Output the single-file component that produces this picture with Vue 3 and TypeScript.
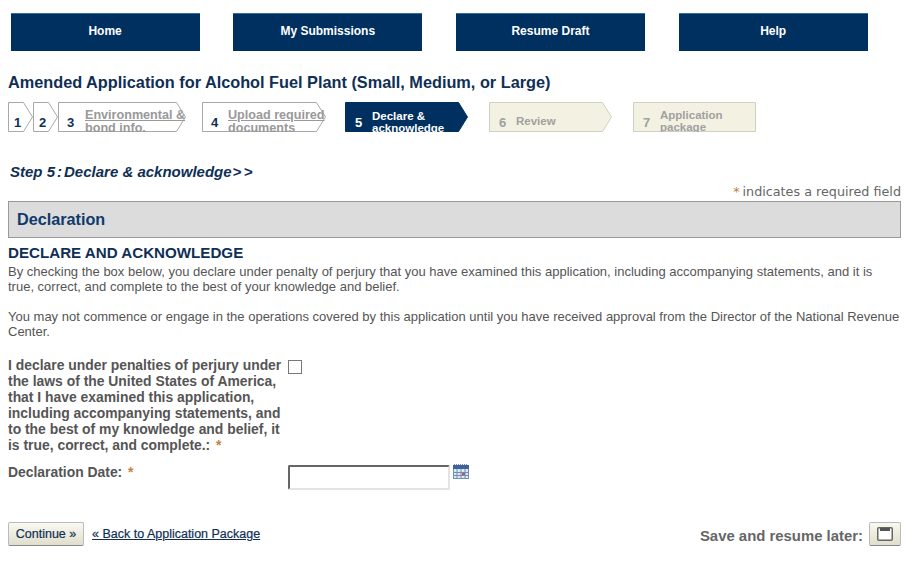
<script setup lang="ts">
interface Step {
  n: number
  lines: string[]
  width: number
  gap: number
  state: 'done' | 'current' | 'todo' | 'last'
}
const nav = ['Home', 'My Submissions', 'Resume Draft', 'Help']
const steps: Step[] = [
  { n: 1, lines: [], width: 25, gap: 0, state: 'done' },
  { n: 2, lines: [], width: 25, gap: 0, state: 'done' },
  { n: 3, lines: ['Environmental &', 'bond info.'], width: 128, gap: 0, state: 'done' },
  { n: 4, lines: ['Upload required', 'documents'], width: 124, gap: 16, state: 'done' },
  { n: 5, lines: ['Declare &', 'acknowledge'], width: 123, gap: 19, state: 'current' },
  { n: 6, lines: ['Review'], width: 123, gap: 21, state: 'todo' },
  { n: 7, lines: ['Application', 'package'], width: 123, gap: 21, state: 'last' },
]
const shape = (s: Step): string => {
  const w = s.width - 0.5
  if (s.state === 'last') return `0.5,0.5 ${w},0.5 ${w},29.5 0.5,29.5`
  const t = w - 9
  return `0.5,0.5 ${t},0.5 ${w},15 ${t},29.5 0.5,29.5`
}
</script>

<template>
  <div class="page">
    <nav class="nav">
      <a v-for="item in nav" :key="item" class="nav-item">{{ item }}</a>
    </nav>

    <h1 class="title">Amended Application for Alcohol Fuel Plant (Small, Medium, or Large)</h1>

    <ol class="steps">
      <li
        v-for="s in steps"
        :key="s.n"
        class="step"
        :class="s.state"
        :style="{ width: s.width + 'px', marginLeft: s.gap + 'px' }"
      >
        <svg class="step-bg" :width="s.width" height="30">
          <polygon :points="shape(s)" />
        </svg>
        <span class="num">{{ s.n }}</span>
        <span v-if="s.lines.length" class="label">
          <span v-for="l in s.lines" :key="l" class="line">{{ l }}</span>
        </span>
      </li>
    </ol>

    <h2 class="step-title">Step 5<span class="colon">:</span>Declare &amp; acknowledge<span class="arrows">&gt;&gt;</span></h2>

    <p class="req"><span class="star">*</span>indicates a required field</p>

    <div class="section">Declaration</div>

    <h3 class="heading">DECLARE AND ACKNOWLEDGE</h3>
    <p class="para first">By checking the box below, you declare under penalty of perjury that you have examined this application, including accompanying statements, and it is true, correct, and complete to the best of your knowledge and belief.</p>
    <p class="para second">You may not commence or engage in the operations covered by this application until you have received approval from the Director of the National Revenue Center.</p>

    <div class="form">
      <label class="lbl">I declare under penalties of perjury under the laws of the United States of America, that I have examined this application, including accompanying statements, and to the best of my knowledge and belief, it is true, correct, and complete.: <span class="star">*</span></label>
      <div class="box-cell"><span class="check"></span></div>
      <label class="lbl date-lbl">Declaration Date: <span class="star">*</span></label>
      <div class="date-cell">
        <span class="date-input"></span>
        <svg class="cal" width="16" height="15" viewBox="0 0 16 15">
          <rect x="0" y="1" width="16" height="14" fill="#dfe6f2" />
          <rect x="0" y="1" width="16" height="4" fill="#3f62a0" />
          <path d="M1 0.5h14" stroke="#8a8a8a" stroke-dasharray="1 1" fill="none" />
          <path d="M0.5 5v10M4 5v10M8 5v10M12 5v10M15.5 5v10M0 8.5h16M0 11.5h16M0 14.5h16" stroke="#6f8fb8" fill="none" />
          <rect x="9" y="9" width="3" height="2" fill="#d05050" />
        </svg>
      </div>
    </div>

    <div class="footer">
      <div class="left">
        <button class="btn" type="button">Continue »</button>
        <a class="back">« Back to Application Package</a>
      </div>
      <div class="right">
        <span class="save">Save and resume later:</span>
        <button class="btn icon" type="button" aria-label="Save">
          <svg width="16" height="14" viewBox="0 0 16 14">
            <rect x="0.75" y="0.75" width="14.5" height="12.5" rx="1" fill="#fff" stroke="#666" stroke-width="1.5" />
            <rect x="3" y="1" width="10" height="3" fill="#555" />
          </svg>
        </button>
      </div>
    </div>
  </div>
</template>

<style>
html, body { margin: 0; background: #fff; }
</style>

<style scoped>
.page {
  width: 893px;
  height: 574px;
  padding: 13px 14px 0 8px;
  font-family: "Liberation Sans", Arial, sans-serif;
  color: #555;
  overflow: hidden;
}
.nav { display: flex; gap: 33.7px; margin-left: 2.6px; }
.nav-item {
  width: 189px;
  height: 38px;
  box-sizing: border-box;
  padding-bottom: 3px;
  border-top: 1px solid #2f6f9f;
  background: #003060;
  color: #fff;
  font-weight: 700;
  font-size: 12px;
  display: flex;
  align-items: center;
  justify-content: center;
}
.title {
  margin: 21px 0 0;
  font-size: 16.3px;
  line-height: 20px;
  font-weight: 700;
  color: #0f2f55;
}
.steps { list-style: none; display: flex; margin: 10px 0 0; padding: 0; height: 30px; }
.step {
  position: relative;
  height: 30px;
  box-sizing: border-box;
  display: flex;
  align-items: flex-start;
  overflow: hidden;
  font-weight: 700;
  font-size: 12.6px;
  color: #999;
}
.step-bg { position: absolute; left: 0; top: 0; }
.step-bg polygon { fill: #fff; stroke: #a8a8a8; stroke-width: 1; }
.num { position: relative; flex: none; width: 27px; padding: 13px 0 0 10px; box-sizing: border-box; line-height: 16px; font-size: 13px; color: #0f2f55; }
.done:nth-child(-n+2) .num { padding-left: 6px; width: 25px; }
.done:nth-child(3) .num { padding-left: 9px; }
.done:nth-child(4) .num { padding-left: 9px; width: 26px; }
.label { position: relative; display: flex; flex-direction: column; }
.line { line-height: 12px; white-space: nowrap; text-decoration: underline; }
.done .label { padding-top: 7px; }
.done .line { line-height: 12.5px; }
.current .step-bg polygon { fill: #003060; stroke: #003060; }
.current { color: #fff; font-size: 11.5px; }
.current .num { color: #fff; }
.current .label { padding-top: 8px; }
.current .line, .todo .line, .last .line { text-decoration: none; }
.todo .step-bg polygon, .last .step-bg polygon { fill: #f3f2e2; stroke: #cfcfc2; }
.todo, .last { color: #a0a0a0; font-size: 11.5px; }
.todo .num, .last .num { color: #a0a0a0; }
.todo .label { padding-top: 13px; }
.last .label { padding-top: 7px; }

.step-title {
  margin: 31px 0 0 2px;
  font-size: 15px;
  line-height: 18px;
  font-style: italic;
  font-weight: 700;
  color: #0f2f55;
}
.colon { margin: 0 2px; }
.arrows { letter-spacing: 2.5px; margin-left: 1px; }
.req {
  margin: 3px 0 0;
  text-align: right;
  font-family: "DejaVu Sans", Verdana, sans-serif;
  font-size: 12.75px;
  line-height: 15px;
  color: #666;
}
.star { color: #bd8347; }
.req .star { margin-right: 3px; }
.lbl .star { margin-left: 2px; }
.section {
  margin-top: 2px;
  height: 37px;
  box-sizing: border-box;
  border: 1px solid #999;
  background: #dcdcdc;
  color: #0f3a6b;
  font-size: 16.2px;
  font-weight: 700;
  line-height: 35px;
  padding-left: 8px;
}
.heading {
  margin: 7px 0 0;
  font-size: 15.15px;
  line-height: 16px;
  font-weight: 700;
  color: #0f2f55;
}
.para { margin: 0; font-size: 13px; line-height: 15px; color: #555; }
.first { margin-top: 3px; }
.second { margin-top: 15px; }
.form {
  display: grid;
  grid-template-columns: 280px 1fr;
  margin-top: 18px;
}
.lbl { font-size: 13.9px; font-weight: 700; line-height: 16px; color: #555; width: 276px; }
.check {
  display: block;
  width: 12px;
  height: 12px;
  border: 1px solid #777;
  background: #fff;
}
.box-cell { padding-top: 3px; }
.date-lbl { margin-top: 11px; }
.date-cell { display: flex; align-items: flex-start; margin-top: 12px; }
.date-input {
  width: 162px;
  height: 25px;
  box-sizing: border-box;
  border-style: solid;
  border-width: 2px 2px 2px 2px;
  border-color: #666 #e4e4e4 #e4e4e4 #666;
  border-radius: 2px;
  background: #fff;
}
.cal { margin-left: 3px; margin-top: -1px; }
.footer {
  display: flex;
  justify-content: space-between;
  align-items: center;
  margin-top: 32px;
}
.left, .right { display: flex; align-items: center; }
.btn {
  height: 24px;
  width: 76px;
  box-sizing: border-box;
  padding: 0;
  border: 1px solid #bbb;
  border-bottom-color: #888;
  border-radius: 2px;
  background: linear-gradient(#faf9f0, #e0decc);
  color: #0f2f55;
  font-family: inherit;
  font-size: 12.5px;
  font-weight: 400;
  -webkit-text-stroke: 0.2px #0f2f55;
}
.back { margin-left: 8px; font-size: 12.5px; color: #0f2f55; text-decoration: underline; -webkit-text-stroke: 0.2px #0f2f55; }
.save { font-size: 14.9px; font-weight: 700; color: #666; margin-right: 6px; padding-top: 3px; }
.icon { width: 32px; display: flex; align-items: center; justify-content: center; }
</style>
